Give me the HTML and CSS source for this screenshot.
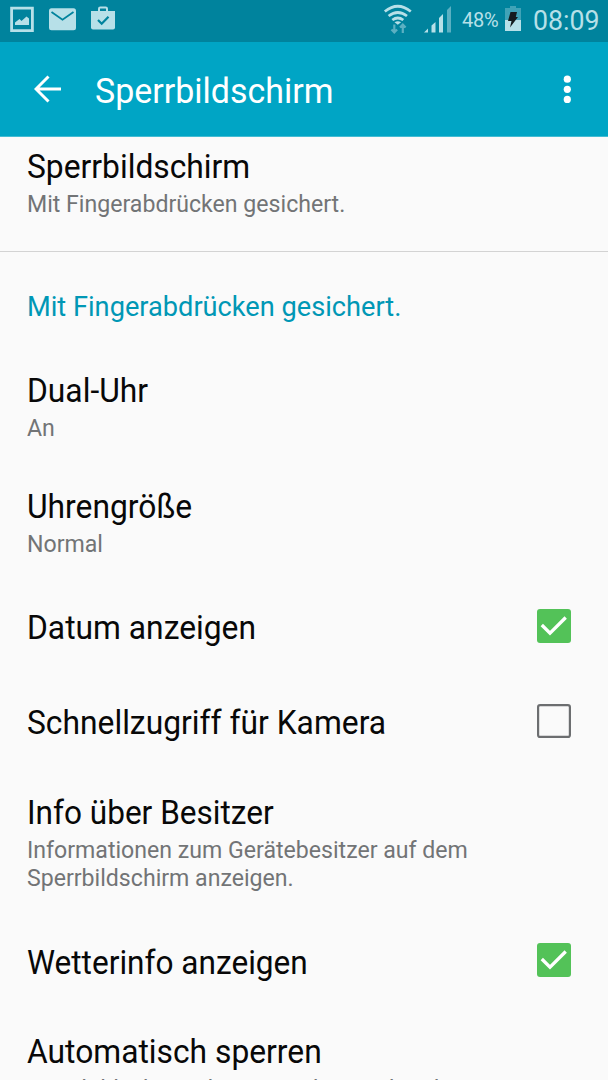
FILE: index.html
```html
<!DOCTYPE html>
<html lang="de">
<head>
<meta charset="utf-8">
<title>Sperrbildschirm</title>
<link rel="stylesheet" href="styles.css">
</head>
<body>
<div class="screen">
  <div class="statusbar">
    <svg class="status-icons" width="130" height="42" viewBox="0 0 130 42">
      <path d="M11.600 8.200h20.800v22.400H11.600z" fill="none" stroke="#b7e0e8" stroke-width="2.800"/>
      <path fill="#b7e0e8" d="M15 25v-2.500l4.500-3.500 2 2 5-4.500 2.500 2V25z"/>
      <rect x="49" y="8.300" width="27" height="22" rx="2.500" fill="#b7e0e8"/>
      <path d="M51.500 12l11 7.700 11-7.700" fill="none" stroke="#00839d" stroke-width="1.800"/>
      <path fill="#b7e0e8" d="M91 11h24v16.500q0 2-2 2H93q-2 0-2-2z"/>
      <path d="M99 11V8.700q0-1.300 1.300-1.300h5.400q1.300 0 1.300 1.300V11" fill="none" stroke="#b7e0e8" stroke-width="2"/>
      <path d="M98 20l3.700 3.700 6.800-7" fill="none" stroke="#00839d" stroke-width="2.200"/>
    </svg>
    <div class="status-right">
      <svg width="72" height="42" viewBox="382 0 72 42">
        <g fill="none" stroke="#b7e0e8" stroke-width="2.700"><path d="M384.800 11.500q13-10.500 26 0"/><path d="M388.600 16q9.200-7 18.400 0"/><path d="M392.300 20q5.500-4 11 0"/></g>
        <path fill="#b7e0e8" d="M394.500 22.300q3.300-2 6.600 0l-3.300 2.500z"/>
        <g fill="none" stroke="#5bb0c2" stroke-width="2.200"><path d="M394.300 24.500v7.500M391.500 29.500l2.800 3 2.800-3M402.800 33v-8M400 27.500l2.800-3 2.800 3"/></g>
        <path fill="#b7e0e8" d="M424 32.500l4-4v4zM431.500 25.500l4-3.500v10.500h-4zM439 18l4-4v18.500h-4z"/>
        <path fill="#5bb0c2" d="M447 10l4-4v26.500h-4z"/>
      </svg>
      <span class="percent">48%</span>
      <svg class="battery" width="18" height="26" viewBox="0 0 18 26">
        <path fill="#40a3b7" d="M6 0h6v2h5v12H1V2h5z"/><path fill="#b7e0e8" d="M1 14h16v11H1z"/>
        <path fill="#151c1e" d="M6.500 6h6.500l-1.200 5H14L6 21.500 7.500 15H4z"/>
      </svg>
      <span class="clock">08:09</span>
    </div>
  </div>
  <div class="appbar">
    <svg class="back" width="28" height="28" viewBox="0 0 28 28"><path d="M14.500 1.500L2 14l12.500 12.500M2 14h25" fill="none" stroke="#fff" stroke-width="3"/></svg>
    <h1 class="heading">Sperrbildschirm</h1>
    <svg class="more" width="8" height="28" viewBox="0 0 8 28" fill="#fff"><circle cx="4.300" cy="4.200" r="3.600"/><circle cx="4.300" cy="14.300" r="3.600"/><circle cx="4.300" cy="24.400" r="3.600"/></svg>
  </div>
  <div class="list">
    <div class="row first"><div class="title">Sperrbildschirm</div><div class="sub">Mit Fingerabdrücken gesichert.</div></div>
    <div class="section">Mit Fingerabdrücken gesichert.</div>
    <div class="row dual"><div class="title">Dual-Uhr</div><div class="sub">An</div></div>
    <div class="row size"><div class="title">Uhrengröße</div><div class="sub">Normal</div></div>
    <div class="row check"><div class="title">Datum anzeigen</div><svg class="box" width="34" height="34" viewBox="0 0 34 34"><rect width="34" height="34" rx="3" fill="#53c258"/><path d="M4.800 16L13 24.200 28.700 8.500" fill="none" stroke="#fff" stroke-width="3.300"/></svg></div>
    <div class="row check"><div class="title">Schnellzugriff für Kamera</div><svg class="box" width="34" height="34" viewBox="0 0 34 34"><rect x="1.100" y="1.100" width="31.800" height="31.800" rx="2" fill="none" stroke="#6c6e70" stroke-width="2.200"/></svg></div>
    <div class="row owner"><div class="title">Info über Besitzer</div><div class="sub">Informationen zum Gerätebesitzer auf dem<br>Sperrbildschirm anzeigen.</div></div>
    <div class="row check weather"><div class="title">Wetterinfo anzeigen</div><svg class="box" width="34" height="34" viewBox="0 0 34 34"><rect width="34" height="34" rx="3" fill="#53c258"/><path d="M4.800 16L13 24.200 28.700 8.500" fill="none" stroke="#fff" stroke-width="3.300"/></svg></div>
    <div class="row auto"><div class="title">Automatisch sperren</div><div class="sub">Sperrbildschirm aktiviert sich 15 Sekunden</div></div>
  </div>
</div>
</body>
</html>
```
FILE: styles.css
```css
* { box-sizing: border-box; }
body { margin: 0; font-family: Roboto, "Liberation Sans", sans-serif; }
.screen { width: 608px; height: 1080px; overflow: hidden; background: #fafafa; display: flex; flex-direction: column; }
.statusbar { height: 42px; flex: none; background: #00839d; color: #b7e0e8; display: flex; justify-content: space-between; }
.status-right { display: flex; width: 226px; }
.status-right > svg { flex: none; }
.percent { width: 41px; padding-left: 8px; font-size: 20px; letter-spacing: -0.3px; line-height: 41px; white-space: nowrap; }
.battery { margin: 6px 0 0 9px; }
.clock { margin-left: 11px; font-size: 28px; line-height: 41px; transform: scaleX(.953); transform-origin: left; }
.appbar { height: 95px; flex: none; background: #00a5c5; border-bottom: 1px solid #43bcd3; display: flex; align-items: center; padding: 0 37px 0 34px; color: #fff; }
.back, .more { flex: none; }
.heading { margin: 5px auto 0 33px; font-size: 35px; font-weight: 400; line-height: 40px; white-space: nowrap; transform: scaleX(.97); transform-origin: left; }
.list { flex: none; white-space: nowrap; }
.row { padding-left: 27px; }
.title { font-size: 33px; line-height: 40px; color: #080808; transform: scaleX(.963); transform-origin: left; }
.sub { font-size: 24px; line-height: 28px; color: #727476; margin-top: 3px; transform: scaleX(.963); transform-origin: left; }
.first { height: 115px; padding-top: 10px; border-bottom: 1px solid #d3d3d3; }
.section { height: 108px; padding-left: 27px; padding-top: 35px; font-size: 28px; line-height: 40px; color: #0097b5; transform: scaleX(.971); transform-origin: 27px 0; }
.dual { height: 116px; padding-top: 11px; }
.size { height: 103px; padding-top: 11px; }
.check { height: 95px; display: flex; align-items: center; justify-content: space-between; padding-right: 37px; }
.check .title { margin-top: 2px; }
.box { flex: none; margin-bottom: 2px; }
.owner { height: 145px; padding-top: 24px; }
.weather .box { margin-bottom: 4px; }
.weather .title { transform: scaleX(.957); }
.owner .title { transform: scaleX(.956); }
.auto { padding-top: 23px; }
```
